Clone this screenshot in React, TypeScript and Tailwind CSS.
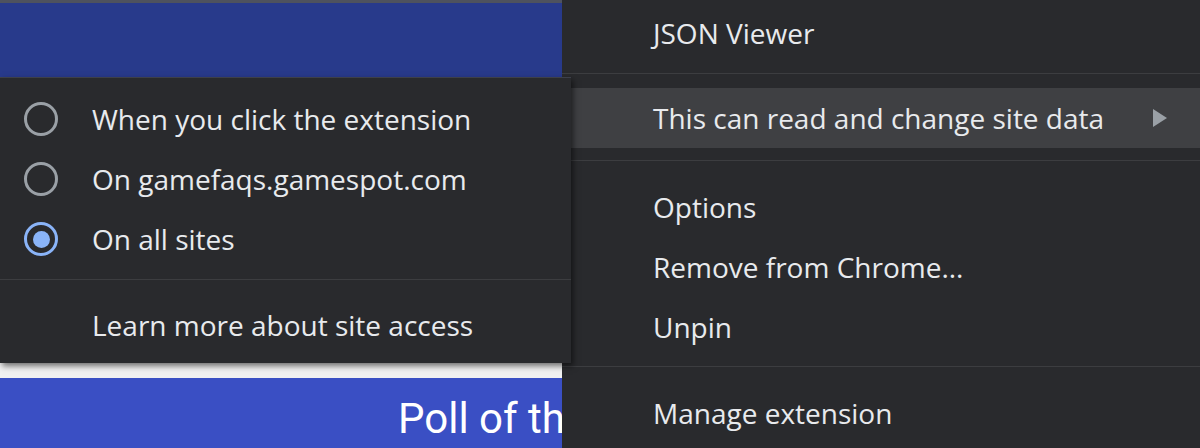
import React from 'react';

const font = { fontFamily: '"Open Sans", "Noto Sans", sans-serif' };

const Radio: React.FC<{ checked?: boolean }> = ({ checked }) =>
  checked ? (
    <span className="flex h-[34px] w-[34px] items-center justify-center rounded-full border-[3px] border-[#8ab4f8]">
      <span className="h-[17px] w-[17px] rounded-full bg-[#8ab4f8]" />
    </span>
  ) : (
    <span className="h-[34px] w-[34px] rounded-full border-[3px] border-[#9aa0a6]" />
  );

const siteOptions = [
  { label: 'When you click the extension', checked: false },
  { label: 'On gamefaqs.gamespot.com', checked: false },
  { label: 'On all sites', checked: true },
];

const SiteAccessMenu: React.FC = () => (
  <div className="absolute left-0 top-[77px] flex h-[286px] w-[571px] flex-col border-t border-[#3d404a] bg-[#292a2d] pt-[11px] text-[#e8eaed] shadow-[2px_3px_6px_rgba(0,0,0,0.55)]">
    {siteOptions.map((opt) => (
      <div key={opt.label} className="flex h-[60px] items-center">
        <div className="flex w-[92px] justify-center pl-[2px] pr-[12px]">
          <Radio checked={opt.checked} />
        </div>
        <span className="text-[28px] leading-none">{opt.label}</span>
      </div>
    ))}
    <div className="mb-[15px] mt-[10px] h-px bg-[#3c3d40]" />
    <div className="flex h-[60px] items-center pl-[92px] text-[28px] leading-none">
      Learn more about site access
    </div>
  </div>
);

const MenuItem: React.FC<{ label: string; active?: boolean; submenu?: boolean }> = ({ label, active, submenu }) => (
  <div className={`flex h-[60px] items-center justify-between pl-[91px] pr-[33px] ${active ? 'bg-[#3f4043]' : ''}`}>
    <span className="text-[28px] leading-none">{label}</span>
    {submenu && (
      <svg width="14" height="18" viewBox="0 0 14 18">
        <path d="M0 0 L14 9 L0 18 Z" fill="#9aa0a6" />
      </svg>
    )}
  </div>
);

const Separator: React.FC<{ className: string }> = ({ className }) => (
  <div className={`h-px bg-[#3c3d40] ${className}`} />
);

export default function App() {
  return (
    <div className="relative flex h-[448px] w-[1200px] overflow-hidden bg-[#292a2d]" style={font}>
      {/* page behind the menus */}
      <div className="flex w-[562px] flex-col overflow-hidden">
        <div className="h-[3px] bg-[#4e525e]" />
        <div className="h-[360px] bg-[#283a8b]" />
        <div className="h-[15px] bg-[#f1f1f1]" />
        <div className="flex flex-1 items-center bg-[#3a4fc4] pl-[398px] pt-[12px]">
          <span className="whitespace-nowrap text-[42px] leading-none text-white" style={{ fontFamily: 'Roboto, sans-serif' }}>
            Poll of the Day
          </span>
        </div>
      </div>

      {/* extension context menu */}
      <div className="flex flex-1 flex-col bg-[#292a2d] pt-[3px] text-[#e8eaed]">
        <MenuItem label="JSON Viewer" />
        <Separator className="mb-[14px] mt-[10px]" />
        <MenuItem label="This can read and change site data" active submenu />
        <Separator className="mb-[16px] mt-[12px]" />
        <MenuItem label="Options" />
        <MenuItem label="Remove from Chrome..." />
        <MenuItem label="Unpin" />
        <Separator className="mb-[16px] mt-[9px]" />
        <MenuItem label="Manage extension" />
      </div>

      <SiteAccessMenu />
    </div>
  );
}
